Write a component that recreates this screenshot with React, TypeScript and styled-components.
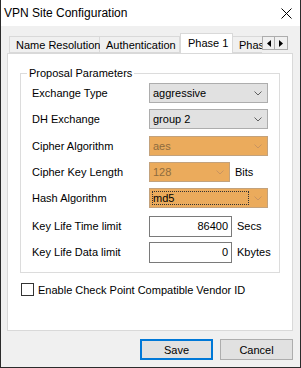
import React from "react";
import styled, { createGlobalStyle } from "styled-components";

const GlobalStyle = createGlobalStyle`
  html, body {
    margin: 0;
    padding: 0;
    background: #ffffff;
  }
  body {
    font-family: "Liberation Sans", Arial, sans-serif;
    font-size: 11px;
    color: #000;
  }
`;

const Window = styled.div`
  width: 301px;
  height: 368px;
  box-sizing: border-box;
  display: flex;
  flex-direction: column;
  background: #f0f0f0;
  border: 1px solid #2b2b2b;
  border-top: none;
`;

const TitleBar = styled.div`
  height: 26px;
  flex: none;
  display: flex;
  align-items: center;
  justify-content: space-between;
  background: #ffffff;
  padding: 0 8px 0 3px;
  font-size: 12px;
`;

const CloseIcon = () => (
  <svg width="11" height="11" viewBox="0 0 11 11">
    <path d="M0.5 0.5 L10.5 10.5 M10.5 0.5 L0.5 10.5" stroke="#000" strokeWidth="1" />
  </svg>
);

const Body = styled.div`
  flex: 1;
  display: flex;
  flex-direction: column;
  padding: 7px 7px 0 6px;
`;

const TabStrip = styled.div`
  height: 20px;
  display: flex;
  align-items: flex-end;
  padding-left: 2px;
  position: relative;
  z-index: 1;
`;

const Tabs = styled.div`
  display: flex;
  align-items: flex-end;
  width: 253px;
  overflow: hidden;
`;

const Tab = styled.div<{ $w: number; $active?: boolean }>`
  flex: none;
  width: ${(p) => p.$w}px;
  box-sizing: border-box;
  height: ${(p) => (p.$active ? 21 : 17)}px;
  margin-bottom: ${(p) => (p.$active ? -1 : 0)}px;
  border: 1px solid #d9d9d9;
  border-bottom: ${(p) => (p.$active ? "none" : "1px solid #d9d9d9")};
  border-left: ${(p) => (p.$active ? "1px solid #d9d9d9" : "none")};
  background: ${(p) => (p.$active ? "#ffffff" : "#f0f0f0")};
  display: flex;
  align-items: center;
  padding-left: ${(p) => (p.$active ? 7 : 6)}px;
  padding-bottom: ${(p) => (p.$active ? 2 : 0)}px;
  white-space: nowrap;
  &:first-child {
    border-left: 1px solid #d9d9d9;
  }
`;

const Arrows = styled.div`
  display: flex;
  align-self: flex-start;
  margin-top: 3px;
`;

const ArrowButton = styled.div`
  width: 13px;
  height: 14px;
  box-sizing: border-box;
  border: 1px solid #adadad;
  background: #f0f0f0;
  display: flex;
  align-items: center;
  justify-content: center;
  & + & {
    margin-left: -1px;
    width: 14px;
  }
`;

const Panel = styled.div`
  height: 278px;
  box-sizing: border-box;
  background: #ffffff;
  border: 1px solid #d9d9d9;
  padding: 12px 12px 0 12px;
  display: flex;
  flex-direction: column;
`;

const Group = styled.fieldset`
  margin: 0;
  padding: 3px 0 10px 11px;
  border: 1px solid #dcdcdc;
  display: flex;
  flex-direction: column;
  min-width: 0;
`;

const Legend = styled.legend`
  padding: 0 2px;
  margin-left: -5px;
  line-height: 14px;
`;

const Row = styled.div<{ $gap?: number }>`
  display: flex;
  align-items: center;
  height: 20px;
  margin-top: ${(p) => p.$gap ?? 6}px;
`;

const Label = styled.div`
  width: 117px;
  flex: none;
  white-space: nowrap;
`;

const Combo = styled.div<{ $w: number; $tone: "gray" | "orange"; $dim?: boolean }>`
  width: ${(p) => p.$w}px;
  height: 20px;
  box-sizing: border-box;
  flex: none;
  position: relative;
  display: flex;
  align-items: center;
  justify-content: space-between;
  padding: 0 5px 0 3px;
  border: 1px solid ${(p) => (p.$tone === "orange" ? "#c3a27c" : "#adadad")};
  background: ${(p) => (p.$tone === "orange" ? "#ebab5c" : "#e1e1e1")};
  color: ${(p) => (p.$dim ? "#8e6b3e" : "#000")};
`;

const Focus = styled.div`
  position: absolute;
  left: 2px;
  top: 2px;
  bottom: 2px;
  right: 18px;
  border: 1px dotted #333;
`;

const Chevron = ({ color }: { color: string }) => (
  <svg width="8" height="5" viewBox="0 0 8 5">
    <path d="M0.5 0.5 L4 4 L7.5 0.5" stroke={color} strokeWidth="1" fill="none" />
  </svg>
);

const TextBox = styled.div`
  width: 83px;
  height: 21px;
  box-sizing: border-box;
  flex: none;
  border: 1px solid #7a7a7a;
  background: #fff;
  display: flex;
  align-items: center;
  justify-content: flex-end;
  padding-right: 3px;
`;

const Unit = styled.span`
  margin-left: 5px;
`;

const CheckRow = styled.label`
  display: flex;
  align-items: center;
  margin-top: 10px;
  margin-left: 1px;
  white-space: nowrap;
`;

const CheckBox = styled.span`
  width: 13px;
  height: 13px;
  box-sizing: border-box;
  border: 1px solid #333;
  background: #fff;
  margin-right: 4px;
  flex: none;
`;

const Footer = styled.div`
  display: flex;
  justify-content: flex-end;
  gap: 7px;
  padding-top: 8px;
`;

const Button = styled.div<{ $default?: boolean }>`
  width: 73px;
  height: 21px;
  box-sizing: border-box;
  border: ${(p) => (p.$default ? "2px solid #0078d7" : "1px solid #adadad")};
  background: #e1e1e1;
  display: flex;
  align-items: center;
  justify-content: center;
`;

const App = () => {
  return (
    <>
      <GlobalStyle />
      <Window>
        <TitleBar>
          <span>VPN Site Configuration</span>
          <CloseIcon />
        </TitleBar>
        <Body>
          <TabStrip>
            <Tabs>
              <Tab $w={91}>Name Resolution</Tab>
              <Tab $w={80}>Authentication</Tab>
              <Tab $w={53} $active>
                Phase 1
              </Tab>
              <Tab $w={60}>Phase 2</Tab>
            </Tabs>
            <Arrows>
              <ArrowButton>
                <svg width="4" height="7" viewBox="0 0 4 7">
                  <path d="M4 0 L0 3.5 L4 7 Z" fill="#000" />
                </svg>
              </ArrowButton>
              <ArrowButton>
                <svg width="4" height="7" viewBox="0 0 4 7">
                  <path d="M0 0 L4 3.5 L0 7 Z" fill="#000" />
                </svg>
              </ArrowButton>
            </Arrows>
          </TabStrip>
          <Panel>
            <Group>
              <Legend>Proposal Parameters</Legend>
              <Row $gap={0}>
                <Label>Exchange Type</Label>
                <Combo $w={119} $tone="gray">
                  aggressive
                  <Chevron color="#606060" />
                </Combo>
              </Row>
              <Row>
                <Label>DH Exchange</Label>
                <Combo $w={119} $tone="gray">
                  group 2
                  <Chevron color="#606060" />
                </Combo>
              </Row>
              <Row $gap={7}>
                <Label>Cipher Algorithm</Label>
                <Combo $w={119} $tone="orange" $dim>
                  aes
                  <Chevron color="#c99460" />
                </Combo>
              </Row>
              <Row>
                <Label>Cipher Key Length</Label>
                <Combo $w={81} $tone="orange" $dim>
                  128
                  <Chevron color="#c99460" />
                </Combo>
                <Unit>Bits</Unit>
              </Row>
              <Row>
                <Label>Hash Algorithm</Label>
                <Combo $w={119} $tone="orange">
                  md5
                  <Focus />
                  <Chevron color="#c99460" />
                </Combo>
              </Row>
              <Row $gap={8}>
                <Label>Key Life Time limit</Label>
                <TextBox>86400</TextBox>
                <Unit>Secs</Unit>
              </Row>
              <Row $gap={6}>
                <Label>Key Life Data limit</Label>
                <TextBox>0</TextBox>
                <Unit>Kbytes</Unit>
              </Row>
            </Group>
            <CheckRow>
              <CheckBox />
              Enable Check Point Compatible Vendor ID
            </CheckRow>
          </Panel>
          <Footer>
            <Button $default>Save</Button>
            <Button>Cancel</Button>
          </Footer>
        </Body>
      </Window>
    </>
  );
};

export default App;
